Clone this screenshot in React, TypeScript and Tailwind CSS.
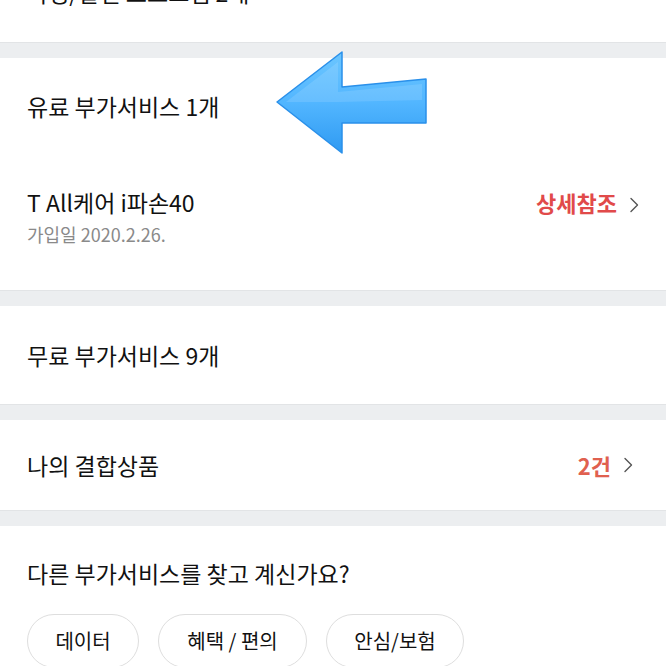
import React from 'react';

const font = { fontFamily: '"Noto Sans CJK KR", "Noto Sans", sans-serif' };

function Chevron() {
  return (
    <svg width="10" height="16" viewBox="0 0 10 16" fill="none" className="ml-3">
      <path d="M2 1.5 L8.5 8 L2 14.5" stroke="#555" strokeWidth="1.4" strokeLinecap="round" strokeLinejoin="round" />
    </svg>
  );
}

function Gap() {
  return <div className="h-[16px] bg-[#eceef0] border-t border-[#e2e4e6]" />;
}

function Arrow() {
  return (
    <svg
      className="absolute left-[274px] top-[50px]"
      width="156"
      height="106"
      viewBox="0 0 156 106"
    >
      <defs>
        <linearGradient id="ab" x1="0" y1="0" x2="0" y2="1">
          <stop offset="0" stopColor="#6cc6ff" />
          <stop offset="0.5" stopColor="#52b6ff" />
          <stop offset="1" stopColor="#2f9af2" />
        </linearGradient>
      </defs>
      <path
        d="M3 52 L68 2 L68 37 L152 29 L152 73 L68 73 L68 103 Z"
        fill="url(#ab)"
        stroke="#2a90ea"
        strokeWidth="1.5"
        strokeLinejoin="round"
      />
      <path d="M12 52 L64 12 L64 42 L148 34 L148 50 L64 52 Z" fill="#ffffff" opacity="0.12" />
    </svg>
  );
}

export default function App() {
  return (
    <div className="relative w-[666px] h-[666px] overflow-hidden bg-white text-[#111]" style={font}>
      <div className="h-[42px] bg-white px-[27px] overflow-hidden">
        <div className="text-[23px] leading-none -mt-[19px]">약정/할인 프로그램 2개</div>
      </div>
      <Gap />
      <div className="bg-white">
        <div className="h-[96px] px-[27px] flex items-center text-[23px]">유료 부가서비스 1개</div>
        <div className="px-[27px] h-[136px] flex justify-between">
          <div className="pt-[33px]">
            <div className="text-[23px] leading-[30px]">T All케어 i파손40</div>
            <div className="text-[18px] leading-[24px] mt-[5px] text-[#8a8a8a]">가입일 2020.2.26.</div>
          </div>
          <div className="pt-[33px] flex items-start">
            <span className="text-[22px] leading-[30px] font-bold text-[#e14a4a]">상세참조</span>
            <span className="mt-[10px]"><Chevron /></span>
          </div>
        </div>
      </div>
      <Gap />
      <div className="h-[98px] bg-white px-[27px] flex items-center text-[23px]">무료 부가서비스 9개</div>
      <Gap />
      <div className="h-[90px] bg-white px-[27px] flex items-center justify-between">
        <span className="text-[23px]">나의 결합상품</span>
        <div className="flex items-center pr-[6px]">
          <span className="text-[22px] font-bold text-[#e0604f]">2건</span>
          <Chevron />
        </div>
      </div>
      <Gap />
      <div className="bg-white px-[27px] pt-[32px]">
        <div className="text-[23px] leading-[30px]">다른 부가서비스를 찾고 계신가요?</div>
        <div className="flex gap-[19px] mt-[26px]">
          <div className="w-[112px] h-[54px] rounded-full border border-[#dedede] flex items-center justify-center text-[20px]">데이터</div>
          <div className="w-[149px] h-[54px] rounded-full border border-[#dedede] flex items-center justify-center text-[20px]">혜택 / 편의</div>
          <div className="w-[138px] h-[54px] rounded-full border border-[#dedede] flex items-center justify-center text-[20px]">안심/보험</div>
        </div>
      </div>
      <Arrow />
    </div>
  );
}
